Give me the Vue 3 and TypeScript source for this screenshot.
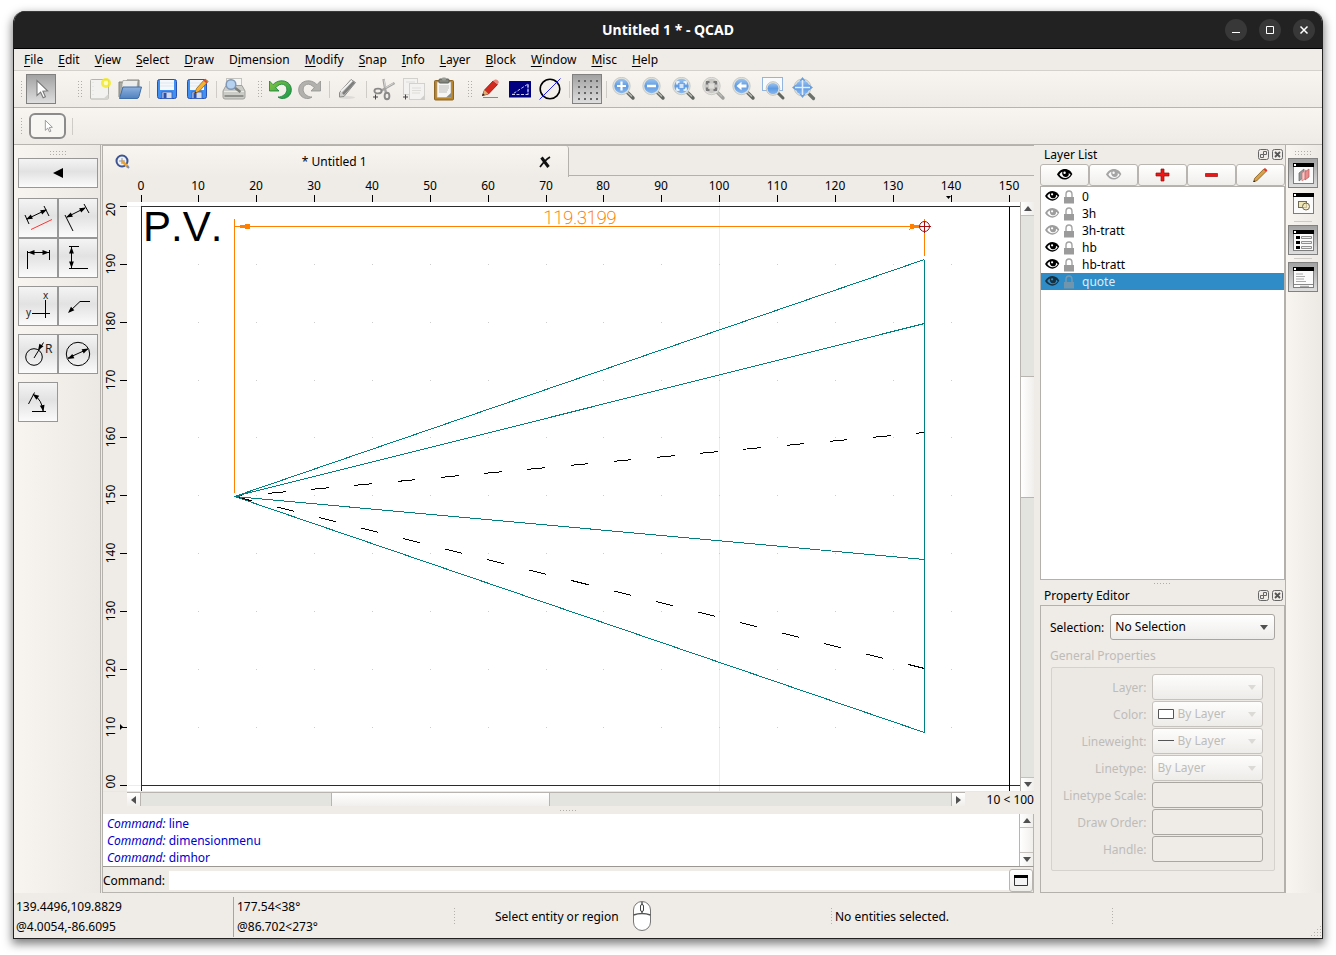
<script setup lang="ts">
import { ref } from 'vue'

interface Menu { pre: string; key: string; post: string }
interface Tool { kind: 'tool' | 'sep' | 'grip' | 'gap'; icon?: string; label?: string; checked?: boolean }
interface Layer { name: string; visible: boolean; selected?: boolean }

const menus: Menu[] = [
  { pre: '', key: 'F', post: 'ile' },
  { pre: '', key: 'E', post: 'dit' },
  { pre: '', key: 'V', post: 'iew' },
  { pre: '', key: 'S', post: 'elect' },
  { pre: '', key: 'D', post: 'raw' },
  { pre: 'D', key: 'i', post: 'mension' },
  { pre: '', key: 'M', post: 'odify' },
  { pre: '', key: 'S', post: 'nap' },
  { pre: '', key: 'I', post: 'nfo' },
  { pre: '', key: 'L', post: 'ayer' },
  { pre: '', key: 'B', post: 'lock' },
  { pre: '', key: 'W', post: 'indow' },
  { pre: '', key: 'M', post: 'isc' },
  { pre: '', key: 'H', post: 'elp' },
]

const t = (icon: string, label: string, checked = false): Tool => ({ kind: 'tool', icon, label, checked })
const sep: Tool = { kind: 'sep' }
const grip: Tool = { kind: 'grip' }

const tools: Tool[] = [
  t('pointer', 'Reset', true), { kind: 'gap' }, grip,
  t('new', 'New'), t('open', 'Open'), sep,
  t('save', 'Save'), t('saveAs', 'Save As'), sep,
  t('print', 'Print Preview'), grip,
  t('undo', 'Undo'), t('redo', 'Redo'), sep,
  t('erase', 'Delete'), sep,
  t('cut', 'Cut'), t('copy', 'Copy'), t('paste', 'Paste'), grip,
  t('pen', 'Drawing Preferences'), t('screen', 'Screen Linetypes'), t('draft', 'Draft Mode'), sep,
  t('grid', 'Grid', true), sep,
  t('zoomIn', 'Zoom In'), t('zoomOut', 'Zoom Out'), t('zoomAuto', 'Auto Zoom'), t('zoomSel', 'Zoom to Selection'),
  t('zoomPrev', 'Previous View'), t('zoomWin', 'Window Zoom'), t('zoomPan', 'Pan Zoom'),
]

const lens = (ring: string, fill: string, handle: string, glyph: string) =>
  `<g transform="translate(-1 -1)"><path d="M16.500 16.500l5.500 5.500" stroke="${handle}" stroke-width="3.400" stroke-linecap="round"/><path d="M15 15l6 5.500" stroke="#b9bdb6" stroke-width="1.200"/><circle cx="10.500" cy="10" r="8.700" fill="${ring}" stroke="#c3c4be" stroke-width=".8"/><circle cx="10.500" cy="10" r="7.200" fill="${fill}"/>${glyph}</g>`
const blueLens = (glyph: string) => lens('#dfe2dd', 'url(#g-blue)', '#626660', glyph)
const corners = 'M6 8.500V6h2.500M12.500 6H15v2.500M15 11.500V14h-2.500M8.500 14H6v-2.500'
const floppy = `<rect x="2.500" y="2.500" width="19" height="19" rx="2" fill="#3f8ff2" stroke="#2b50b4"/><rect x="5" y="3" width="14" height="10" fill="#f4f7fb"/><path d="M5 6h14M5 9h14" stroke="#dfe6ef"/><rect x="7" y="15" width="10" height="6.500" fill="#d4dbe6" stroke="#2e57b8" stroke-width=".8"/><rect x="8.500" y="16" width="3" height="5" fill="#2c4fa8"/>`
const eye = (c: string, hole: string) =>
  `<path d="M1 6.500C3 2.500 6 1 9 1c3.500 0 6.300 2.300 7.300 5.300C14 10.200 11.500 11.500 9 11.500c-3.600 0-6-2-8-5z" fill="${c}"/><path d="M3.400 6.400C4.600 4.600 5.600 4 6.400 3.800 5.600 6.500 7.200 9 9.600 9c2.400 0 3.700-1.800 3.100-4 1 .5 1.600 1.300 1.900 1.700-1.200 2-3 3.200-5.400 3.200-2.600 0-4.500-1.500-5.800-3.500z" fill="${hole}"/><circle cx="8.600" cy="4.700" r="1.200" fill="${hole}"/>`
const pane = `<rect x="1.500" y="1.500" width="20" height="20" fill="#fbfbfb" stroke="#7d7d7d"/><rect x="1" y="1" width="21" height="4" fill="#000"/><rect x="2" y="2" width="2" height="2" fill="#fff"/>`

const icons: Record<string, string> = {
  pointer: '<path d="M8 3.500v15l3.600-3.300 2.600 5.600 2.200-1-2.500-5.500 4.700-.4z" fill="#fff" stroke="#7a7a7a" stroke-width="1.100"/>',
  new: '<rect x="2.500" y="2.500" width="18" height="19.500" rx="1" fill="#f2f2f0" stroke="#b5b5b0"/><path d="M20.500 17v5H15z" fill="#d5d5d0"/><path d="M5 5v14" stroke="#dcdcd8" stroke-dasharray="1 3"/><circle cx="18" cy="6" r="5" fill="#f2ea2a" opacity=".85"/><circle cx="18" cy="6" r="2.300" fill="#fffcc0"/>',
  open: '<path d="M1 20V5h7l1-2h12v8" fill="#a8a8a4" stroke="#85857f"/><path d="M4 7.500l1-4h15l-1 7H4z" fill="#ececea" stroke="#9b9b97" stroke-width=".7"/><path d="M1.500 21.500L5 10h18.500l-2.500 9.500q-.5 2-2 2z" fill="url(#g-folder)" stroke="#3f6ea8"/>',
  save: floppy,
  saveAs: floppy + '<path d="M9.500 16.500l2-5L20 2l3.200 2.400L14.500 14z" fill="#f6b233" stroke="#96661a" stroke-width=".8"/><path d="M19 3l3 2.600" stroke="#d8463c" stroke-width="1.800"/><path d="M9.300 16.800l1-2.300 1.400 1.200z" fill="#333"/>',
  print: '<rect x="4.500" y="1.500" width="15" height="12" fill="#f5f5f3" stroke="#c3c3bf"/><path d="M1 14l3-5.500h16L23 14v6q0 2-2 2H3q-2 0-2-2z" fill="#cbcbc7" stroke="#a0a09c"/><path d="M2 14.500h20" stroke="#e9e9e6"/><path d="M2.500 19h19" stroke="#8f8f8c" stroke-width="2"/><path d="M12.500 10.500l6 4.500" stroke="#7c807a" stroke-width="2.600"/><circle cx="9" cy="7.500" r="4.800" fill="#b5d1ef" stroke="#7f98b6" stroke-width="1.500"/>',
  undo: '<path d="M1.500 4v10h9.500l-3.200-3.300C10 7.800 13 6.600 15.500 7.500c4 1.600 4.600 7 .8 10.200-1.600 1.400-4 2.400-6.300 2.300 3 2.400 8 2 11-1.200 3.500-3.800 3-10-1-13C15.500 2.500 9 3.300 5 7.700z" fill="url(#g-green)" stroke="#177f37" stroke-width=".8"/>',
  redo: '<path d="M22.500 4v10H13l3.200-3.300C14 7.800 11 6.600 8.500 7.500c-4 1.600-4.600 7-.8 10.200 1.600 1.400 4 2.400 6.300 2.300-3 2.400-8 2-11-1.200-3.500-3.800-3-10 1-13C8.500 2.500 15 3.300 19 7.700z" fill="#b2b1ae" stroke="#929290" stroke-width=".8"/>',
  erase: '<ellipse cx="12" cy="20.500" rx="8" ry="1.500" fill="#dddbd8"/><path d="M4.500 15.500L16 2.500l4.500 3L9 19.500l-4.500.5z" fill="#cfcfcd" stroke="#8b8b89"/><path d="M8 17L19 5" stroke="#7f7f7d" stroke-width="2.600"/><path d="M6 14.500L17 3.500" stroke="#f8f8f8" stroke-width="1.300"/>',
  cut: '<path d="M11.500 2l2.300 13.500M22.500 6L9.500 13.500" stroke="#a5a4a2" stroke-width="2.400"/><path d="M12 2.500l1.300 8M21.500 6.300L14 10.500" stroke="#e4e3e1" stroke-width=".8"/><ellipse cx="6" cy="14" rx="3.600" ry="2.400" fill="none" stroke="#8a8987" stroke-width="1.900"/><ellipse cx="15" cy="19" rx="2.400" ry="3.300" fill="none" stroke="#8a8987" stroke-width="1.900"/><path d="M3.500 17.500v5M1 20h5" stroke="#444" />',
  copy: '<g fill="#f3f2f0" stroke="#d2d1ce"><rect x="1.500" y="1.500" width="14" height="16"/><rect x="7.500" y="6.500" width="15" height="16"/></g><path d="M10 11h9M10 13.500h9M10 16h8M4 5h9" stroke="#dddcd9"/><path d="M22.500 18v4.500H18z" fill="#cfceca"/><path d="M3.500 17.500v5M1 20h5" stroke="#444"/>',
  paste: '<rect x="2.500" y="3.500" width="19" height="19.500" rx="1" fill="#b98428" stroke="#8d6420"/><rect x="5" y="5" width="14" height="15.500" fill="#f6f6f5" stroke="#a5a5a2" stroke-width=".6"/><path d="M7 9h10M7 11h10M7 13h9M7 15h8" stroke="#bdbdbb"/><rect x="7" y="2" width="10" height="4" rx="1" fill="#83857f" stroke="#5f615c"/><rect x="10" y=".5" width="4" height="3" rx="1" fill="#9a9c96"/><path d="M19 16v4.500h-5z" fill="#8b8d88"/>',
  pen: '<path d="M4.500 18.500l2-5.500L15 4l4.500 3.500L10.500 17z" fill="#d32a20" stroke="#8b1510" stroke-width=".8"/><path d="M15 4l2-1.500q1.500-.5 3 1t.5 2.500l-1 1.500z" fill="#e8877d"/><path d="M4.500 18.500l2-5.500 4 4z" fill="#dfae70"/><path d="M4 19l1-2.800 1.800 1.700z" fill="#222"/><path d="M5 20.500h15" stroke="#f55" stroke-width="1"/>',
  screen: '<rect x="1" y="4" width="22" height="16.500" rx=".5" fill="#000080"/><path d="M4 17.500h16V7zM20 7v10.500" fill="none" stroke="#c9c9f4" stroke-dasharray="3 1.500"/>',
  draft: '<circle cx="12" cy="12" r="9.800" fill="none" stroke="#000" stroke-width="1.600"/><path d="M1.500 22.500L22.500 1.500" stroke="#2020ff"/>',
  grid: '<path fill="#666" d="M3 3h2v2H3zM9 3h2v2H9zM15 3h2v2h-2zM21 3h2v2h-2zM3 9h2v2H3zM9 9h2v2H9zM15 9h2v2h-2zM21 9h2v2h-2zM3 15h2v2H3zM9 15h2v2H9zM15 15h2v2h-2zM21 15h2v2h-2zM3 21h2v2H3zM9 21h2v2H9zM15 21h2v2h-2zM21 21h2v2h-2z"/>',
  zoomIn: blueLens('<path d="M10.500 5.500v9M6 10h9" stroke="#fff" stroke-width="2.200"/>'),
  zoomOut: blueLens('<path d="M6 10h9" stroke="#fff" stroke-width="2.400"/>'),
  zoomAuto: blueLens(`<path d="${corners}" fill="none" stroke="#fff" stroke-width="1.500"/><rect x="8.500" y="8" width="4" height="4" fill="#d5e6fa"/>`),
  zoomSel: lens('#e3e2de', '#c8c7c4', '#a09f9d', `<path d="${corners}" fill="none" stroke="#777" stroke-width="2.200"/><rect x="8" y="7.500" width="5" height="5" fill="#deddda"/>`),
  zoomPrev: blueLens('<path d="M5.500 10l5-4.200v2.700h5v3h-5v2.700z" fill="#fff"/>'),
  zoomWin: '<rect x=".5" y=".5" width="20" height="13" fill="#f8fafc" stroke="#94b5dd"/><path d="M16 16l5 5" stroke="#626660" stroke-width="3" stroke-linecap="round"/><circle cx="11" cy="11.500" r="6.800" fill="#e3e5df" stroke="#b7b8b2" stroke-width=".8"/><circle cx="11" cy="11.500" r="5.500" fill="url(#g-blue)"/>',
  zoomPan: '<path d="M16 16l5.500 5.500" stroke="#6d716b" stroke-width="3.200" stroke-linecap="round"/><circle cx="10.500" cy="10.500" r="8.500" fill="#dfe2dd" stroke="#c3c4be"/><circle cx="10.500" cy="10.500" r="7" fill="url(#g-blue)"/><path d="M10.500 0l3 4h-6zM10.500 21l3-4h-6zM0 10.500l4-3v6zM21 10.500l-4-3v6z" fill="#6b9fdc"/><path d="M10.500 3v15M3 10.500h15" stroke="#e2eefb" stroke-width="1.600"/>',
  dockLayers: pane + '<path d="M7 19V11l5-4v8z" fill="#999" stroke="#666" stroke-width=".7"/><path d="M10 19v-8l4-3v8z" fill="#f7caca" stroke="#c77" stroke-width=".7"/><path d="M13 18v-8l4-3v8z" fill="#e98f8f" stroke="#b55" stroke-width=".7"/>',
  dockBlocks: pane + '<rect x="6.500" y="9.500" width="8" height="6" fill="#efe6b8" stroke="#6f6a50"/><circle cx="14" cy="14.500" r="3.500" fill="#efe6b8" fill-opacity=".7" stroke="#6f6a50"/>',
  dockProps: pane + '<path d="M4 7h4v3H4zM4 12h4v3H4zM4 17h4v3H4z" fill="#000"/><path d="M9.500 7.500h10v2h-10zM9.500 12.500h10v2h-10zM9.500 17.500h10v2h-10z" fill="#eee" stroke="#777" stroke-width=".8"/>',
  dockCommand: pane + '<path d="M4 8h7M4 10.500h9M4 13h8M4 15.500h10" stroke="#aaa"/><path d="M2 18.500h19" stroke="#888"/><path d="M8 20.300h9" stroke="#999"/>',
}

const head = (x: number, y: number, deg: number) =>
  `<path d="M0 0l6.500-2.400v4.800z" fill="#000" transform="translate(${x} ${y}) rotate(${deg})"/>`
const dimTools: { label: string; art: string; newGroup?: boolean }[] = [
  { label: 'Aligned', art: `<path d="M9 21l19-9M7 17l4 9M26 8l5 10" stroke="#000"/><path d="M13 31.500l21-10" stroke="#f33"/>${head(8, 21.5, -26)}${head(29, 11.5, 154)}` },
  { label: 'Rotated', art: `<path d="M9 19l18-9M7 17l8 16M26 6l5 9" stroke="#000"/>${head(8, 19.5, -26)}${head(28, 9.5, 154)}` },
  { label: 'Horizontal', art: `<g shape-rendering="crispEdges"><path d="M9.500 13v18M31.500 12v10M10 14.500h21" stroke="#000"/></g>${head(10, 14.5, 0)}${head(31, 14.5, 180)}` },
  { label: 'Vertical', art: `<g shape-rendering="crispEdges"><path d="M11 8.500h10M13.500 9v21M11 30.500h19" stroke="#000"/></g>${head(13.5, 9, 90)}${head(13.5, 30, 270)}` },
  { label: 'Ordinate', newGroup: true, art: '<g shape-rendering="crispEdges"><path d="M14 27.500h18M27.500 14v18" stroke="#000"/></g><text x="8" y="30">y</text><text x="25" y="13">x</text>' },
  { label: 'Leader', art: `<path d="M11 26L22 15.500h10" fill="none" stroke="#000"/>${head(10, 27, -44)}` },
  { label: 'Radial', newGroup: true, art: `<circle cx="16" cy="23" r="8.300" fill="none" stroke="#000"/><path d="M16 24l5.500-9 4-6.500" stroke="#000" fill="none"/>${head(20, 16.5, -58)}<text class="big" x="27" y="19">R</text>` },
  { label: 'Diametric', art: `<circle cx="20" cy="20" r="11.700" fill="none" stroke="#000"/><path d="M10 24l20-9" stroke="#000"/>${head(9.5, 25, -26)}${head(30.5, 14.5, 154)}` },
  { label: 'Angular', newGroup: true, art: `<path d="M10.500 22l6-11.500M14 29.500h14" stroke="#000" fill="none"/><path d="M16 13q8 5 9 16" stroke="#000" fill="none"/>${head(14.5, 12, 35)}${head(25.5, 29.5, 258)}` },
]
const dimGroups = dimTools.reduce<(typeof dimTools)[]>((acc, d) => {
  if (d.newGroup || acc.length === 0) acc.push([])
  acc[acc.length - 1].push(d)
  return acc
}, [])

const layers = ref<Layer[]>([
  { name: '0', visible: true },
  { name: '3h', visible: false },
  { name: '3h-tratt', visible: false },
  { name: 'hb', visible: true },
  { name: 'hb-tratt', visible: true },
  { name: 'quote', visible: true, selected: true },
])
const selectLayer = (layer: Layer) => layers.value.forEach((l) => { l.selected = l === layer })
const eyeArt = (l: Layer) => eye(l.selected ? '#16303f' : l.visible ? '#000' : '#9d9d9d', l.selected ? '#308cc6' : '#fff')

const layerActions = [
  { label: 'Show all layers', art: eye('#000', '#fafafa') },
  { label: 'Hide all layers', art: eye('#a5a5a5', '#fafafa') },
  { label: 'Add layer', art: '<path d="M7 1h3v4h5v3h-5v5H7V8H2V5h5z" fill="#f01414" stroke="#8f1010" stroke-width=".7"/>' },
  { label: 'Remove layer', art: '<path d="M2.500 5.500h12v3h-12z" fill="#f01414" stroke="#8f1010" stroke-width=".7"/>' },
  { label: 'Edit layer', art: '<path d="M1.500 14l1.200-3.700L12 .8l2.500 2.300L5 12.500z" fill="#d9a047" stroke="#7d5a1e" stroke-width=".8"/><path d="M11.500 1.500L13 0l2.500 2.300-1.500 1.500z" fill="#e33"/><path d="M1.300 14.300l.8-2 1.200 1.200z" fill="#222"/>' },
]

const step = 868 / 15
const colPx = (i: number) => Math.floor(i * step)
const rowPx = (i: number) => Math.round(i * step)
const cols = Array.from({ length: 16 }, (_, i) => i)
const rows = Array.from({ length: 11 }, (_, i) => i)

const history = ['line', 'dimensionmenu', 'dimhor']
const command = ref('')

interface Field { id: string; label: string; type: 'select' | 'text'; value?: string; mark?: string }
const fields: Field[] = [
  { id: 'layer', label: 'Layer:', type: 'select', value: '' },
  { id: 'color', label: 'Color:', type: 'select', value: 'By Layer', mark: 'box' },
  { id: 'weight', label: 'Lineweight:', type: 'select', value: 'By Layer', mark: 'line' },
  { id: 'linetype', label: 'Linetype:', type: 'select', value: 'By Layer' },
  { id: 'scale', label: 'Linetype Scale:', type: 'text' },
  { id: 'order', label: 'Draw Order:', type: 'text' },
  { id: 'handle', label: 'Handle:', type: 'text' },
]
</script>

<template>
  <div class="desktop">
    <svg class="defs" aria-hidden="true">
      <defs>
        <linearGradient id="g-blue" x1="0" y1="0" x2="0" y2="1"><stop offset="0" stop-color="#9cc3f0" /><stop offset=".5" stop-color="#5f9be2" /><stop offset="1" stop-color="#86b6ee" /></linearGradient>
        <linearGradient id="g-folder" x1="0" y1="0" x2="0" y2="1"><stop offset="0" stop-color="#8fb2dc" /><stop offset="1" stop-color="#4f81bf" /></linearGradient>
        <linearGradient id="g-green" x1="0" y1="0" x2="1" y2="1"><stop offset="0" stop-color="#86c440" /><stop offset="1" stop-color="#159a4d" /></linearGradient>
      </defs>
    </svg>
    <div class="window">
      <header class="titlebar">
        <span class="title">Untitled 1 * - QCAD</span>
        <div class="wm">
          <button type="button" aria-label="Minimize"><svg width="22" height="22"><path d="M7 13.500h8" stroke="#fff" /></svg></button>
          <button type="button" aria-label="Maximize"><svg width="22" height="22"><path d="M7.500 7.500h7v7h-7z" fill="none" stroke="#fff" /></svg></button>
          <button type="button" aria-label="Close"><svg width="22" height="22"><path d="M7.500 7.500l7 7M14.500 7.500l-7 7" stroke="#fff" stroke-width="1.500" /></svg></button>
        </div>
      </header>

      <nav class="menubar">
        <button v-for="m in menus" :key="m.key + m.post" type="button">{{ m.pre }}<u>{{ m.key }}</u>{{ m.post }}</button>
      </nav>

      <div class="toolbar" role="toolbar" aria-label="Main">
        <i class="grip first"></i>
        <template v-for="(item, i) in tools" :key="i">
          <button v-if="item.kind === 'tool'" type="button" class="tool" :class="{ checked: item.checked }" :aria-label="item.label">
            <svg width="24" height="24" viewBox="0 0 24 24" v-html="icons[item.icon!]"></svg>
          </button>
          <i v-else :class="item.kind"></i>
        </template>
      </div>

      <div class="toolbar options">
        <i class="grip first"></i>
        <button type="button" class="mode" aria-label="Selection mode">
          <svg width="16" height="16" viewBox="0 0 24 24" v-html="icons.pointer"></svg>
        </button>
        <i class="sep"></i>
      </div>

      <main class="body">
        <aside class="toolbox">
          <i class="dots"></i>
          <button type="button" class="back" aria-label="Back"><svg width="10" height="10"><path d="M0 5l10-5v10z" /></svg></button>
          <div v-for="(g, gi) in dimGroups" :key="gi" class="group">
            <button v-for="d in g" :key="d.label" type="button" :aria-label="d.label">
              <svg class="dim" width="40" height="40" v-html="d.art"></svg>
            </button>
          </div>
        </aside>

        <section class="center">
          <div class="tabs">
            <div class="tab">
              <svg width="15" height="15" viewBox="0 0 15 15"><circle cx="7" cy="7" r="5.500" fill="#eef1f6" stroke="#3d5490" stroke-width="2" /><path d="M4 7h6M7 4v6" stroke="#8a95ad" /><path d="M7 7l6 6" stroke="#e6a23c" stroke-width="2.500" /><path d="M12 12l2 2" stroke="#7a8bb5" stroke-width="2" /></svg>
              <span>* Untitled 1</span>
              <button type="button" aria-label="Close tab"><svg width="14" height="14"><path d="M3.500 2.500l7 9.500" stroke="#111" stroke-width="3" /><path d="M12 2Q7 5 2 12" stroke="#111" stroke-width="1.700" fill="none" /></svg></button>
            </div>
          </div>

          <svg class="hruler">
            <g v-for="i in cols" :key="i">
              <text :x="38 + colPx(i)" y="13" text-anchor="middle">{{ i * 10 }}</text>
              <rect :x="38 + colPx(i)" y="18" width="1" height="7" />
            </g>
            <path d="M843 19h5l-2.500 3z" />
          </svg>

          <div class="view">
            <svg class="vruler">
              <g v-for="i in rows" :key="i">
                <text :transform="`translate(12 ${4 + rowPx(i)}) rotate(-90)`" text-anchor="middle">{{ 200 - i * 10 }}</text>
                <rect x="17" :y="4 + rowPx(i)" width="7" height="1" />
              </g>
              <path d="M17 522v6l3-3z" />
            </svg>
            <svg class="canvas">
              <g transform="translate(.5 .5)" fill="none" shape-rendering="crispEdges">
                <path d="M592 0V600M0 4H14M0 583H14M14 0V4" stroke="#ececec" />
                <template v-for="r in rows" :key="r">
                  <rect v-for="c in cols" :key="c" :x="13.5 + colPx(c)" :y="3.5 + rowPx(r)" width="1" height="1" fill="#ccc" />
                </template>
                <path d="M14 600V4H1400M14 583H1400" stroke="#2b2b2b" />
                <path d="M882 4V600" stroke="#000" />
                <g stroke="#000">
                  <path d="M107 294L797 230" stroke-dasharray="17.700 25.700" stroke-dashoffset="9.700" />
                  <path d="M107 294L797 466" stroke-dasharray="17.700 25.700" />
                </g>
                <path d="M797 57L107 294 797 121M797 357L107 294 797 530M797 57V530" stroke="#008080" />
                <path d="M107 16V290M797 16V53M107 24H797" stroke="#ff7f00" />
                <path d="M107 24l15-3v6zM796 24l-14-3v6z" fill="#ff7f00" />
                <path d="M791 24H803M797 18V30" stroke="#a01010" />
              </g>
              <circle cx="797.500" cy="24.500" r="5" fill="none" stroke="#a01010" />
              <text class="pv" x="16" y="39">P.V.</text>
              <text class="measure" x="453" y="22" text-anchor="middle">119.3199</text>
            </svg>
            <div class="vscroll">
              <button type="button" aria-label="Scroll up"><svg width="8" height="5"><path d="M0 5l4-5 4 5z" /></svg></button>
              <div class="trough a"></div>
              <div class="slider"></div>
              <div class="trough b"></div>
              <button type="button" aria-label="Scroll down"><svg width="8" height="5"><path d="M0 0l4 5 4-5z" /></svg></button>
            </div>
          </div>

          <div class="bottom">
            <div class="hscroll">
              <button type="button" aria-label="Scroll left"><svg width="5" height="8"><path d="M5 0L0 4l5 4z" /></svg></button>
              <div class="trough a"></div>
              <div class="slider"></div>
              <div class="trough b"></div>
              <button type="button" aria-label="Scroll right"><svg width="5" height="8"><path d="M0 0l5 4-5 4z" /></svg></button>
            </div>
            <span class="scale">10 &lt; 100</span>
          </div>
          <div class="splitter"><i class="hdots"></i></div>

          <div class="history">
            <div class="log">
              <div v-for="h in history" :key="h"><em>Command:</em> {{ h }}</div>
            </div>
            <div class="vscroll small">
              <button type="button" aria-label="History up"><svg width="8" height="5"><path d="M0 5l4-5 4 5z" /></svg></button>
              <div class="slider"></div>
              <button type="button" aria-label="History down"><svg width="8" height="5"><path d="M0 0l4 5 4-5z" /></svg></button>
            </div>
          </div>
          <div class="prompt">
            <label for="command">Command:</label>
            <input id="command" v-model="command" type="text" />
            <button type="button" aria-label="Command menu"><svg width="14" height="11"><path d="M.5.5h13v10H.5z" fill="#f4f4f4" stroke="#333" /><path d="M0 0h14v3H0z" /></svg></button>
          </div>
        </section>

        <aside class="dock">
          <div class="docktitle">
            <h2>Layer List</h2>
            <button type="button" aria-label="Float layer list"><svg width="11" height="11"><path d="M2.500.5h6q2 0 2 2v6q0 2-2 2h-6q-2 0-2-2v-6q0-2 2-2z" fill="none" stroke="#666" /><path d="M5.500 2.500h3v3h-3zM2.500 5.500h3v3h-3z" fill="none" stroke="#666" /></svg></button>
            <button type="button" aria-label="Close layer list"><svg width="11" height="11"><path d="M2.500.5h6q2 0 2 2v6q0 2-2 2h-6q-2 0-2-2v-6q0-2 2-2z" fill="none" stroke="#666" /><path d="M3 3l5 5M8 3l-5 5" stroke="#555" stroke-width="1.800" /></svg></button>
          </div>
          <div class="actions">
            <button v-for="a in layerActions" :key="a.label" type="button" :aria-label="a.label"><svg width="17" height="14" v-html="a.art"></svg></button>
          </div>
          <ul class="layers">
            <li v-for="l in layers" :key="l.name" :class="{ selected: l.selected }" @click="selectLayer(l)">
              <svg class="eye" width="16" height="13" viewBox="0 0 17 14" v-html="eyeArt(l)"></svg>
              <svg class="lock" width="10" height="14"><path d="M2 7V4.500Q2 1 5 1t3 3.500V7" fill="none" stroke="#a3a3a3" stroke-width="1.400" /><path d="M0 7h10v6.500H0z" fill="#9b9b9b" /></svg>
              <span>{{ l.name }}</span>
            </li>
          </ul>
          <div class="splitter dsplit"><i class="hdots"></i></div>
          <div class="docktitle">
            <h2>Property Editor</h2>
            <button type="button" aria-label="Float property editor"><svg width="11" height="11"><path d="M2.500.5h6q2 0 2 2v6q0 2-2 2h-6q-2 0-2-2v-6q0-2 2-2z" fill="none" stroke="#666" /><path d="M5.500 2.500h3v3h-3zM2.500 5.500h3v3h-3z" fill="none" stroke="#666" /></svg></button>
            <button type="button" aria-label="Close property editor"><svg width="11" height="11"><path d="M2.500.5h6q2 0 2 2v6q0 2-2 2h-6q-2 0-2-2v-6q0-2 2-2z" fill="none" stroke="#666" /><path d="M3 3l5 5M8 3l-5 5" stroke="#555" stroke-width="1.800" /></svg></button>
          </div>
          <div class="props">
            <div class="selrow">
              <label for="selection">Selection:</label>
              <span class="combo">
                <select id="selection"><option>No Selection</option></select>
                <svg class="arrow" width="8" height="5"><path d="M0 0h8L4 5z" /></svg>
              </span>
            </div>
            <h3>General Properties</h3>
            <div class="form">
              <template v-for="f in fields" :key="f.id">
                <label :for="f.id">{{ f.label }}</label>
                <span v-if="f.type === 'select'" class="combo off" :class="{ marked: f.mark }">
                  <select :id="f.id" disabled><option>{{ f.value }}</option></select>
                  <svg v-if="f.mark" class="mark" width="16" height="10">
                    <path v-if="f.mark === 'box'" d="M.5.5h15v9H.5z" fill="#fff" stroke="#555" />
                    <path v-else d="M0 4.500h16" stroke="#555" />
                  </svg>
                  <svg class="arrow" width="8" height="5"><path d="M0 0h8L4 5z" /></svg>
                </span>
                <input v-else :id="f.id" type="text" disabled />
              </template>
            </div>
          </div>
        </aside>

        <aside class="strip">
          <i class="dots"></i>
          <button type="button" class="on" aria-label="Layer list"><svg width="23" height="23" v-html="icons.dockLayers"></svg></button>
          <button type="button" aria-label="Block list"><svg width="23" height="23" v-html="icons.dockBlocks"></svg></button>
          <hr />
          <button type="button" class="on" aria-label="Property editor"><svg width="23" height="23" v-html="icons.dockProps"></svg></button>
          <hr />
          <button type="button" class="on" aria-label="Command line"><svg width="23" height="23" v-html="icons.dockCommand"></svg></button>
        </aside>
      </main>

      <footer class="status">
        <div class="coords">139.4496,109.8829<br />@4.0054,-86.6095</div>
        <div class="coords polar">177.54&lt;38°<br />@86.702&lt;273°</div>
        <div class="cell hint">
          <span>Select entity or region</span>
          <svg width="19" height="31"><rect x=".5" y=".5" width="17" height="29" rx="8.500" fill="#fff" stroke="#777" /><path d="M.5 14q8.500-3 17 0M9 1v3M9 10v3" stroke="#555" stroke-width="1.500" fill="none" /><rect x="7.500" y="3.500" width="3" height="7" rx="1.500" fill="#fff" stroke="#444" /></svg>
        </div>
        <div class="cell">No entities selected.</div>
        <div class="cell last"><svg width="12" height="12" fill="#b5b2ae"><path d="M10 1h1v1h-1zM7 4h1v1H7zM10 4h1v1h-1zM4 7h1v1H4zM7 7h1v1H7zM10 7h1v1h-1zM1 10h1v1H1zM4 10h1v1H4zM7 10h1v1H7zM10 10h1v1h-1z" /></svg></div>
      </footer>
    </div>
  </div>
</template>

<style>
body { margin: 0; background: #fff; }
</style>

<style scoped>
* { box-sizing: border-box; }
button, input, select { font: inherit; color: inherit; margin: 0; padding: 0; border: 0; background: none; border-radius: 0; outline: none; }
svg { display: block; flex: none; }
.defs { position: absolute; width: 0; height: 0; }
.desktop { height: 100vh; min-height: 700px; padding: 11px 13px 16px; font: 12px/17px "Noto Sans", sans-serif; color: #000; --dot: conic-gradient(at 1px 1px, transparent 75%, #b0aca8 0); }
.window { height: 100%; display: flex; flex-direction: column; background: #efebe7; border: 1px solid #222; border-top: 0; border-radius: 12px 12px 0 0; box-shadow: 0 4px 10px 1px rgba(0, 0, 0, .5); overflow: hidden; }

.titlebar { position: relative; height: 38px; flex: none; display: flex; align-items: center; justify-content: center; background: #222; border-bottom: 1px solid #000; box-shadow: inset 0 1px #3a3a3a; }
.title { color: #fff; font-weight: 700; font-size: 14px; }
.wm { position: absolute; right: 7px; top: 8px; display: flex; gap: 12px; }
.wm button { width: 22px; height: 22px; border-radius: 50%; background: #383838; }

.menubar { height: 22px; flex: none; display: flex; align-items: center; gap: 1px; padding-left: 3px; border-bottom: 1px solid #d4d0cc; }
.menubar button { padding: 0 7px; }
.menubar u { text-underline-offset: 2px; text-decoration-thickness: 1px; text-decoration-skip-ink: none; }

.toolbar { height: 37px; flex: none; display: flex; align-items: center; background: linear-gradient(#f8f5f1, #eeebe6); border-bottom: 1px solid #b7b4b0; }
.tool { width: 30px; height: 30px; flex: none; display: grid; place-items: center; }
.checked { border: 1px solid #818181; background: linear-gradient(#a2a2a2, #dedede); }
.grip { width: 16px; height: 17px; flex: none; padding: 0 3px 0 9px; background: var(--dot) 9px 0 / 3px 3px content-box; }
.grip.first { width: 12px; padding: 0 3px 0 5px; background-position: 5px 0; }
.gap { width: 13px; flex: none; }
.sep { width: 7px; height: 17px; flex: none; background: linear-gradient(#cfccc8, #cfccc8) 4px 0 / 1px 100% no-repeat; }
.mode { width: 37px; height: 26px; margin: 0 2px 0 3px; border: 2px solid #8b8b8b; border-radius: 6px; background: #f8f6f3; display: grid; place-items: center; }

.body { flex: 1; min-height: 0; display: flex; }
.toolbox { width: 87px; flex: none; padding: 6px 2px 0 4px; border-right: 1px solid #b4b1ad; background: linear-gradient(90deg, #f8f5f0, #ece9e4); }
.dots { display: block; width: 17px; height: 4px; margin: 0 auto 3px; background: var(--dot) 0 0 / 3px 3px; }
.toolbox .back { display: grid; place-items: center; width: 80px; height: 30px; margin-bottom: 10px; border: 1px solid #979797; background: linear-gradient(#f4f4f4, #e2e2e2 45%, #fbfbfb); }
.group { display: flex; flex-wrap: wrap; width: 80px; margin-bottom: 8px; }
.group button { width: 40px; height: 40px; border: 1px solid #979797; background: linear-gradient(#f4f4f4, #e2e2e2 45%, #fbfbfb); }
.dim { margin: -1px; }
.dim :deep(text) { font: 10px "Noto Sans", sans-serif; fill: #222; }
.dim :deep(.big) { font-size: 12px; }

.center { flex: 1; min-width: 0; margin: 0 6px 0 1px; display: flex; flex-direction: column; border-left: 1px solid #b4b1ad; }
.tabs { height: 32px; flex: none; display: flex; border-top: 1px solid #b4b1ad; background: linear-gradient(#b4b1ad, #b4b1ad) 0 29px / 100% 1px no-repeat; }
.tab { flex: 0 1 50%; display: flex; align-items: center; justify-content: space-between; padding: 0 15px 0 12px; border-right: 1px solid #b4b1ad; border-radius: 0 3px 0 0; background: linear-gradient(#f8f5f1, #efebe7); }
.tab button { width: 14px; height: 14px; }
.hruler { width: 100%; height: 25px; }
.vruler { width: 24px; height: 100%; }
.view { flex: 1; min-height: 0; display: flex; border-bottom: 1px solid #eae7e3; }
.canvas { flex: 1; min-width: 0; width: 0; height: 100%; background: #fff; }
.pv { font: 42px "Liberation Sans", Arial, sans-serif; font-kerning: none; }
.measure { font: 100 18px Roboto, sans-serif; fill: #ff7f00; stroke: #ff7f00; stroke-width: .3; }

.vscroll { width: 14px; flex: none; display: flex; flex-direction: column; border-left: 1px solid #b8b5b1; }
.vscroll button { height: 14px; flex: none; display: grid; place-items: center; background: linear-gradient(90deg, #fff, #f0eeeb); border-bottom: 1px solid #c4c1bd; }
.vscroll button:last-child { border-bottom: 0; border-top: 1px solid #c4c1bd; }
.vscroll svg, .hscroll svg { fill: #505050; }
.vscroll .slider { flex: 120; background: linear-gradient(90deg, #fff, #f1efec); border: solid #b8b5b1; border-width: 1px 0; }
.vscroll.small .slider { border: 0; }
.vscroll .a { flex: 161; }
.vscroll .b { flex: 280; }
.trough { background: #e3e3df; }
.bottom { height: 14px; flex: none; display: flex; padding-left: 24px; }
.hscroll { flex: 1; display: flex; border-top: 1px solid #b8b5b1; }
.hscroll button { width: 14px; flex: none; display: grid; place-items: center; background: linear-gradient(#fff, #f0eeeb); border-right: 1px solid #b8b5b1; }
.hscroll button:last-child { border-right: 0; border-left: 1px solid #b8b5b1; }
.hscroll .a { flex: 191; }
.hscroll .b { flex: 402; }
.hscroll .slider { flex: 218; background: linear-gradient(#fff, #f1efec); border: solid #b8b5b1; border-width: 0 1px; }
.scale { width: 69px; flex: none; text-align: right; line-height: 15px; }
.splitter { height: 8px; flex: none; display: grid; place-items: center; }
.hdots { width: 17px; height: 1px; background: var(--dot) 0 0 / 3px 3px; }

.history { height: 53px; flex: none; display: flex; background: #fff; border-bottom: 1px solid #9b9894; border-right: 1px solid #b8b5b1; }
.log { flex: 1; padding: 1px 4px; color: #00c; }
.prompt { height: 26px; flex: none; display: flex; align-items: center; padding-top: 2px; border: solid #b8b5b1; border-width: 0 1px 1px 0; }
.prompt label { margin-right: 4px; }
.prompt input { flex: 1; min-width: 0; height: 19px; background: #fff; }
.prompt button { width: 24px; height: 23px; display: grid; place-items: center; border: 1px solid #b8b5b1; border-radius: 3px; background: linear-gradient(#fff, #efedea); }

.dock { width: 245px; flex: none; display: flex; flex-direction: column; }
h2, h3 { font: inherit; margin: 0; }
.docktitle { height: 18px; flex: none; display: flex; align-items: center; gap: 3px; padding: 0 2px 0 4px; }
.docktitle h2 { flex: 1; }
.actions { height: 24px; flex: none; display: flex; padding-top: 1px; border-bottom: 1px solid #b4b1ad; }
.actions button { flex: 1; display: grid; place-items: center; border: 1px solid #b8b5b1; border-radius: 3px; background: linear-gradient(#fff, #f0eeeb); }
.layers { flex: 1; min-height: 0; margin: 0; padding: 1px 0 0; list-style: none; background: #fff; border: solid #b4b1ad; border-width: 0 1px 1px; }
.layers li { height: 17px; display: flex; align-items: center; padding-left: 3px; }
.layers li span { margin-left: 8px; }
.lock { margin-left: 4px; }
.selected { background: #308cc6; color: #dcebf7; }
.selected .lock { opacity: .6; }
.dsplit { height: 6px; }
.dock .dsplit + .docktitle { height: 19px; }
.props { height: 288px; flex: none; padding: 8px 9px 0; border: 1px solid #b4b1ad; }
.selrow { display: flex; align-items: center; gap: 6px; }
.combo { position: relative; flex: 1; min-width: 0; }
.combo select { display: block; width: 100%; height: 26px; appearance: none; padding: 0 20px 1px 4px; border: 1px solid #a8a5a1; border-radius: 3px; background: linear-gradient(#fff, #eeecea); opacity: 1; }
.arrow { position: absolute; right: 7px; top: 11px; fill: #505050; pointer-events: none; }
.off .arrow { fill: #dcdad7; }
.off select { color: #bebcb9; border-color: #c6c3bf; background: linear-gradient(#fdfdfc, #eeece9); }
.marked select { padding-left: 24px; }
.mark { position: absolute; left: 6px; top: 8px; pointer-events: none; }
.props h3 { margin-top: 7px; color: #bebcb9; }
.form { margin: 3px 0 0 1px; padding: 6px 11px 8px; display: grid; grid-template-columns: 1fr 111px; gap: 1px 6px; align-items: center; border: 1px solid #d5d2ce; border-radius: 2px; background: #ece9e5; }
.form label { text-align: right; color: #bebcb9; white-space: nowrap; }
.form input { width: 100%; height: 26px; border: 1px solid #aaa7a3; border-radius: 3px; background: #efebe7; }

.strip { width: 37px; flex: none; padding: 6px 2px 0 0; display: flex; flex-direction: column; align-items: center; border-left: 1px solid #b4b1ad; background: linear-gradient(90deg, #f8f5f0, #ece9e4); }
.strip .dots { flex: none; margin: 0 0 3px; }
.strip button { width: 30px; height: 30px; flex: none; display: grid; place-items: center; }
.strip .on { border: 1px solid #818181; background: linear-gradient(#a2a2a2, #dedede); }
.strip hr { width: 18px; height: 1px; margin: 3px 0; border: 0; background: #cfccc8; flex: none; }

.status { height: 45px; flex: none; display: grid; grid-template-columns: 219fr 221fr 377fr 281fr 210fr; align-items: center; padding-top: 2px; }
.coords { line-height: 20px; padding-left: 2px; }
.polar { padding-left: 3px; border-left: 1px solid #a8a5a1; }
.cell { display: flex; align-items: center; height: 17px; padding-left: 4px; background: repeating-linear-gradient(#b4b1ad 0 1px, transparent 1px 3px) 0 0 / 1px 100% no-repeat; }
.hint { padding-left: 41px; gap: 14px; }
.last { align-items: flex-end; justify-content: flex-end; }
.last svg { margin-bottom: -12px; }
</style>
